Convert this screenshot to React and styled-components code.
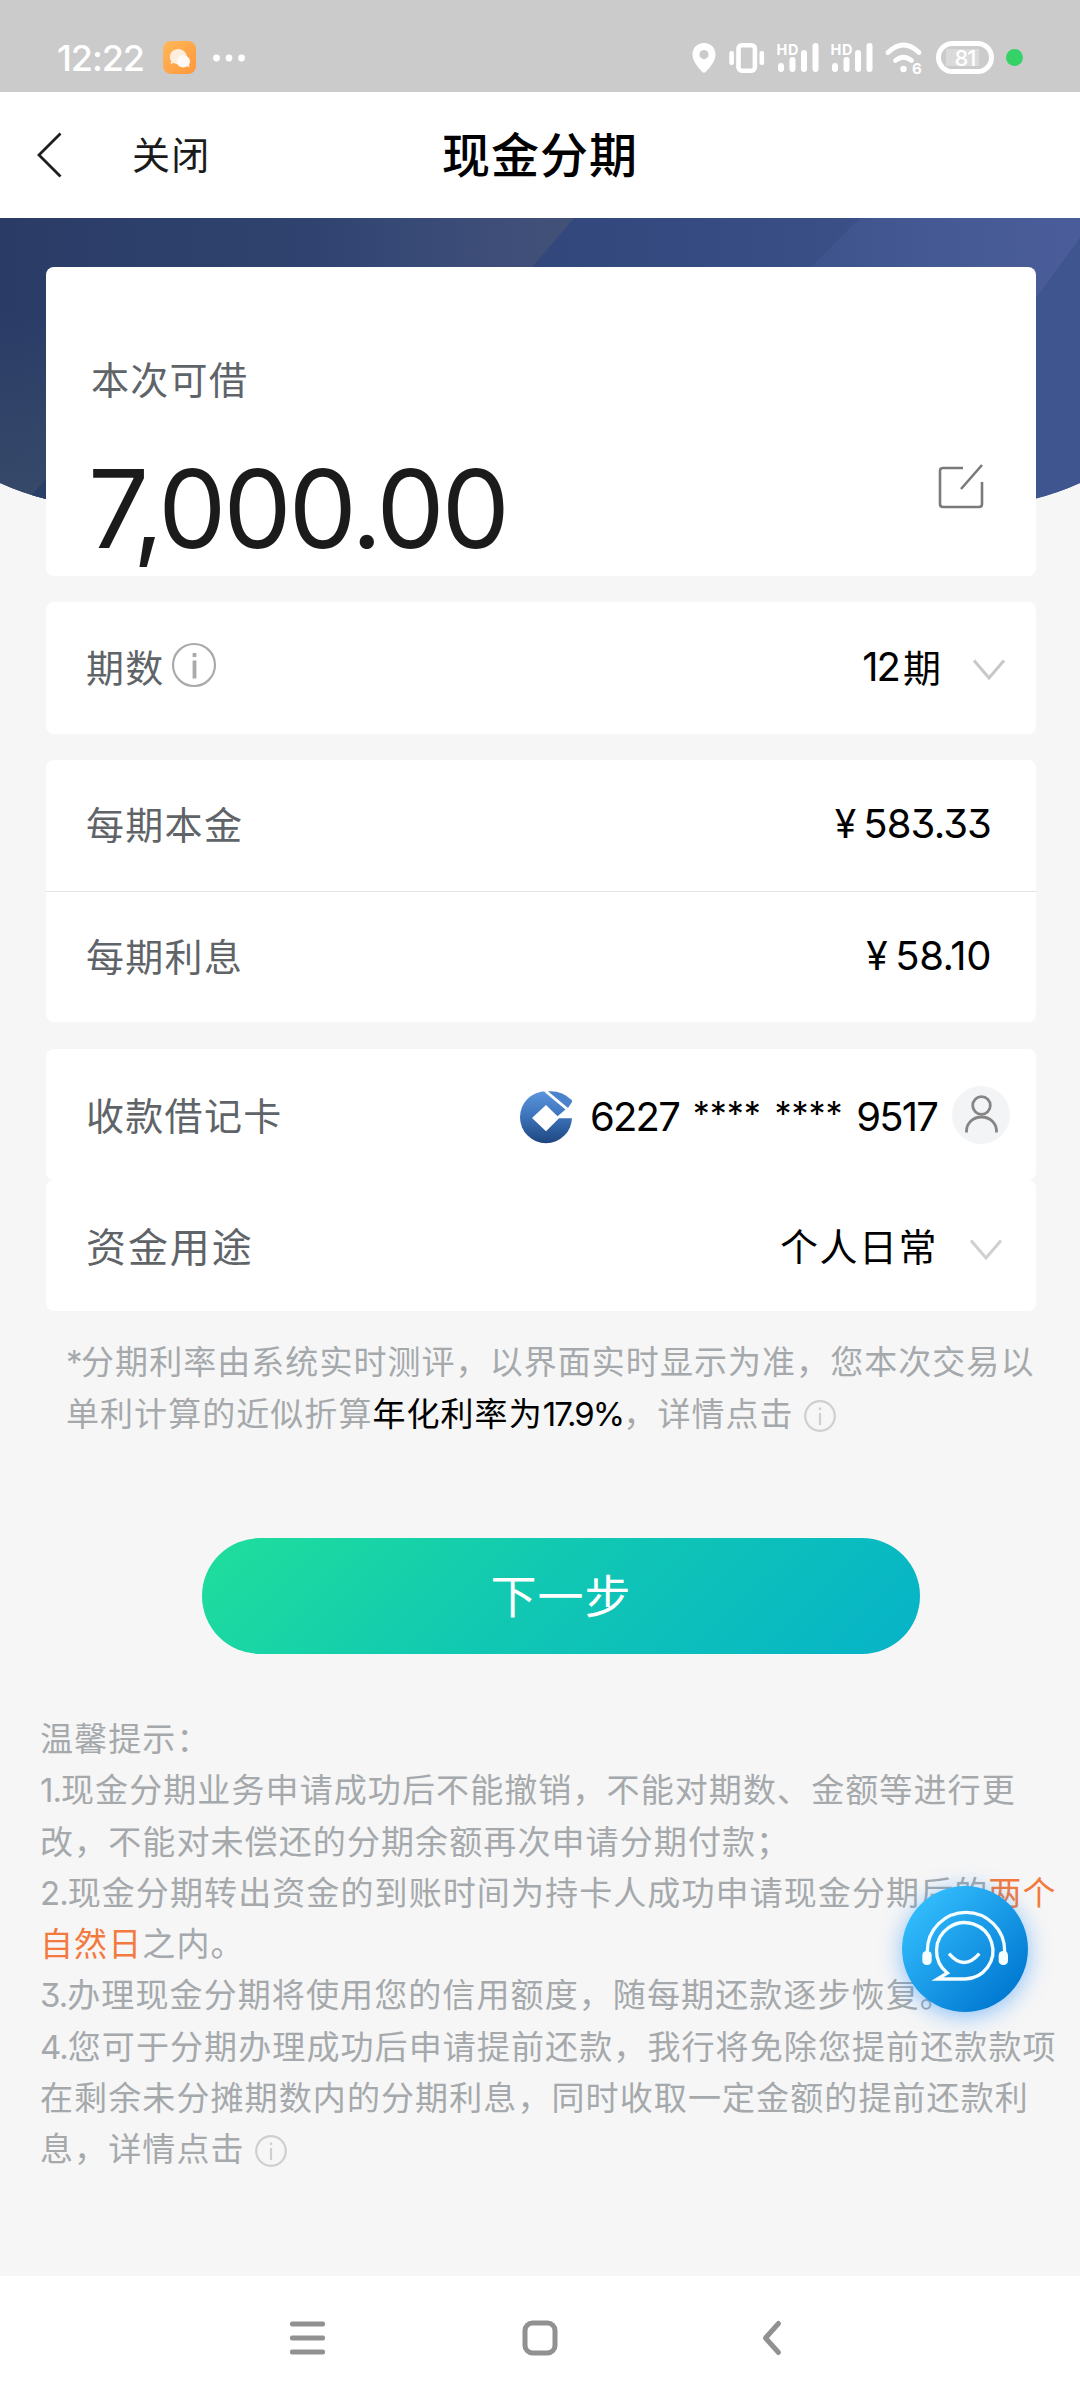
import React from 'react';
import styled, { createGlobalStyle } from 'styled-components';

const GlobalStyle = createGlobalStyle`
  * {
    box-sizing: border-box;
  }

  body {
    margin: 0;
    background-color: #f6f6f6;
    font-family: 'Inter', 'Noto Sans CJK SC', sans-serif;
    font-feature-settings: 'cv09';
  }

  svg {
    display: block;
    flex-shrink: 0;
    overflow: visible;
  }
`;

const Page = styled.div`
  display: flex;
  flex-direction: column;
  width: 1080px;
  height: 2400px;
  overflow: hidden;
`;

// status bar
const StatusBar = styled.div`
  display: flex;
  align-items: center;
  height: 92px;
  padding: 23px 57px 0;
  background-color: #cbcbcb;
  color: #fff;
`;

const Clock = styled.span`
  width: 106px;
  font-size: 36px;
  font-weight: 500;
  letter-spacing: -1.1px;
  white-space: nowrap;
`;

const StatusIcons = styled.div`
  display: flex;
  align-items: center;
  margin-left: auto;
`;

const Battery = styled.div`
  display: flex;
  align-items: center;
  justify-content: center;
  width: 58px;
  height: 33px;
  margin: 0 12px 0 13px;
  border: 5px solid #fff;
  border-radius: 17px;
  background: linear-gradient(#dadada, #dadada) 5px 3px / 33px 17px no-repeat;
  font-size: 22px;
  font-weight: 500;
  letter-spacing: -1px;
`;

const GreenDot = styled.i`
  width: 17px;
  height: 17px;
  border-radius: 50%;
  background-color: #36d167;
`;

// header
const Header = styled.header`
  display: grid;
  grid-template-columns: 132px 1fr auto 1fr 132px;
  align-items: center;
  height: 126px;
  background-color: #fff;
`;

const BackButton = styled.button`
  padding: 0 0 0 35px;
  border: none;
  background-color: transparent;
`;

const CloseText = styled.span`
  padding-bottom: 5px;
  color: #1a1a1a;
  font-size: 38px;
  letter-spacing: 1.3px;
`;

const Title = styled.h1`
  margin: 0;
  padding-bottom: 6px;
  color: #000;
  font-size: 48px;
  font-weight: 500;
  letter-spacing: 1px;
`;

// body
const Banner = styled.div`
  height: 310px;
  margin-bottom: -261px;
`;

const Content = styled.main`
  position: relative;
  flex: 1;
`;

const CardList = styled.div`
  display: flex;
  flex-direction: column;
  gap: 26px;
  padding: 0 44px 0 46px;
`;

const Card = styled.section`
  border-radius: 8px;
  background-color: #fff;
`;

const AmountCard = styled(Card)`
  height: 309px;
  padding: 85px 52px 0 45px;
`;

const AmountLabel = styled.div`
  color: #5f6468;
  font-size: 38px;
  line-height: 56px;
  letter-spacing: 1.3px;
`;

const AmountLine = styled.div`
  display: flex;
  align-items: flex-start;
  justify-content: space-between;
  margin-top: 33px;
`;

const Amount = styled.strong`
  padding-top: 3px;
  color: #1b1b1b;
  font-size: 108px;
  font-weight: 400;
  line-height: 130px;
  letter-spacing: -2.9px;
  margin-left: -3px;
`;

const EditIcon = styled.svg`
  width: 46px;
  height: 46px;
  margin-top: 22px;
`;

const Row = styled.div`
  display: flex;
  align-items: center;
  height: ${(props) => props.$height || 131}px;
  padding: 0 ${(props) => props.$right || 45}px 4px 40px;
  border-bottom: ${(props) => (props.$line ? '1px solid #e4e4e4' : 'none')};
`;

const BankCards = styled.div`
  margin-top: 1px;
`;

const RoundRow = styled(Row)`
  padding-bottom: 0;
  border-radius: 8px;
  background-color: #fff;
`;

const Label = styled.span`
  margin-right: auto;
  display: flex;
  align-items: center;
  padding-bottom: 2px;
  color: #5f6468;
  font-size: ${(props) => (props.$large ? 40 : 38)}px;
  letter-spacing: ${(props) => (props.$large ? 1.9 : 1.3)}px;
`;

const Value = styled.span`
  color: #000;
  font-size: ${(props) => props.$size || 38}px;
  letter-spacing: ${(props) => props.$spacing || 0}px;
  white-space: nowrap;
`;

const Yen = styled.span`
  margin-right: 8px;
  font-size: 39px;
`;

const CardNumber = styled.div`
  display: flex;
  justify-content: space-between;
  width: 347px;
  margin: 3px 15px 0 17px;
  color: #000;
  font-size: 40px;
  letter-spacing: -1.8px;
`;

const Stars = styled.span`
  font-size: 34px;
  line-height: 43px;
  letter-spacing: 0;
`;

const Avatar = styled.div`
  display: flex;
  align-items: center;
  justify-content: center;
  width: 58px;
  height: 58px;
  border-radius: 50%;
  background-color: #f3f4f6;
`;

const Chevron = styled.svg`
  width: 34px;
  height: 22px;
  margin: 8px 0 0 ${(props) => props.$left}px;
`;

const RateNote = styled.p`
  margin: 26px 0 0;
  padding-left: 66px;
  color: #a5a9ac;
  font-size: 33px;
  line-height: 51.5px;
  letter-spacing: 1.05px;
  white-space: nowrap;

  b {
    color: #000;
    font-weight: 400;
  }
`;

const Asterisk = styled.span`
  letter-spacing: -1.5px;
`;

const Rate = styled.span`
  letter-spacing: -1.9px;
`;

const InlineInfo = styled.svg`
  display: inline-block;
  width: 34px;
  height: 34px;
  margin-left: 9px;
  vertical-align: -7px;
`;

const NextButton = styled.button`
  display: block;
  width: 718px;
  height: 116px;
  margin: 98px 0 0 202px;
  padding: 0 0 7px;
  border: none;
  border-radius: 58px;
  background: linear-gradient(135deg, #1fdd9c 2%, #11c8b2 45%, #06b3c8 100%);
  color: #fff;
  font-family: inherit;
  font-size: 46px;
  letter-spacing: 1px;
`;

const Tips = styled.div`
  margin-top: 60px;
  padding-left: 40px;
  color: #a5a9ac;
  font-size: 33px;
  line-height: 51.3px;
  letter-spacing: 1.1px;
  white-space: nowrap;
`;

const Orange = styled.span`
  color: #f37a3e;
`;

const Num = styled.span`
  letter-spacing: -1px;
`;

const ServiceButton = styled.div`
  position: absolute;
  right: 52px;
  top: 1668px;
  width: 126px;
  height: 126px;
  border-radius: 50%;
  background: linear-gradient(135deg, #35c1ff 8%, #0077d1 88%);
  box-shadow: 0 4px 22px rgba(30, 140, 255, 0.5);
`;

const NavBar = styled.nav`
  display: flex;
  align-items: center;
  justify-content: space-between;
  height: 124px;
  padding: 0 298px 0 289px;
  background-color: #fff;
`;

const Signal = ({ left }) => (
  <svg width="42" height="32" viewBox="0 0 42 32" fill="#fff" style={{ marginLeft: left }}>
    <text x="-0.5" y="13" fontSize="14.5" fontWeight="700" textLength="22">
      HD
    </text>
    <rect x="1" y="21" width="6" height="9" rx="3" />
    <rect x="12.5" y="15" width="6" height="15" rx="3" />
    <rect x="24" y="8" width="6" height="22" rx="3" />
    <rect x="35.5" y="1" width="6" height="29" rx="3" />
  </svg>
);

const ChevronDown = ({ left, color = '#c8c8c8' }) => (
  <Chevron $left={left} viewBox="0 0 34 22" fill="none" stroke={color} strokeWidth="3">
    <path d="M2 1.5 L17 19 L32 1.5" />
  </Chevron>
);

const SmallInfo = () => (
  <InlineInfo viewBox="0 0 34 34" fill="none" stroke="#cdcfd0" strokeWidth="2.2">
    <circle cx="17" cy="17" r="14.8" />
    <path d="M17 14 V26 M17 8.5 V11" />
  </InlineInfo>
);

const BankLogo = () => (
  <svg width="53" height="53" viewBox="0 0 53 53" style={{ marginTop: 6 }}>
    <defs>
      <linearGradient id="bank" x1="0" y1="0" x2="0" y2="1">
        <stop offset="0" stopColor="#5a95dd" />
        <stop offset="0.45" stopColor="#3f76bd" />
        <stop offset="1" stopColor="#1e4680" />
      </linearGradient>
    </defs>
    <circle cx="26" cy="26.2" r="26" fill="url(#bank)" />
    <path d="M23 -1 H53 V27.3 H39 L26 40.2 L12 27 L26 14 L37.5 25.3 L45.5 18.5 L26.5 2.8 Z" fill="#fff" />
    <path d="M28 0.3 Q42 -0.6 52 9.3 V11 L48 17 Z" fill="#4a83cb" />
  </svg>
);

function App() {
  return (
    <Page>
      <GlobalStyle />
      <StatusBar>
        <Clock>12:22</Clock>
        <svg width="33" height="33" viewBox="0 0 33 33">
          <defs>
            <linearGradient id="chat" x1="0" y1="0" x2="1" y2="1">
              <stop offset="0" stopColor="#ffb95a" />
              <stop offset="1" stopColor="#ff963a" />
            </linearGradient>
          </defs>
          <rect width="33" height="33" rx="8" fill="url(#chat)" />
          <path d="M15 8 A9 7.8 0 0 1 23 19 A9 7.8 0 0 1 10.5 22 L7.5 23 L8.2 20 A9 7.8 0 0 1 15 8 Z" fill="#ffeede" />
          <path d="M21 14.5 A6.4 5.9 0 0 1 26 23.6 L26.6 26 L24 25.2 A6.5 6 0 1 1 21 14.5 Z" fill="#fffaf5" />
        </svg>
        <svg width="34" height="8" viewBox="0 0 34 8" fill="#fff" style={{ marginLeft: 16 }}>
          <circle cx="4.5" cy="4" r="3.4" />
          <circle cx="17" cy="4" r="3.4" />
          <circle cx="29.5" cy="4" r="3.4" />
        </svg>
        <StatusIcons>
          <svg width="24" height="30" viewBox="0 0 24 30">
            <path
              fill="#fff"
              fillRule="evenodd"
              d="M12 0 C5 0 0.5 5 0.5 11.5 C0.5 19 7 25 10.3 29 Q12 30.6 13.7 29 C17 25 23.5 19 23.5 11.5 C23.5 5 19 0 12 0 Z M12 7 A4.6 4.6 0 1 1 12 16.2 A4.6 4.6 0 1 1 12 7 Z"
            />
          </svg>
          <svg width="36" height="32" viewBox="0 0 36 32" style={{ marginLeft: 13 }}>
            <rect x="9.5" y="3.2" width="16.4" height="25.5" rx="3.5" fill="none" stroke="#fff" strokeWidth="4.6" />
            <rect x="0.3" y="9" width="4.6" height="14" rx="2" fill="#fff" />
            <rect x="30.5" y="9" width="4.6" height="14" rx="2" fill="#fff" />
          </svg>
          <Signal left={12} />
          <Signal left={12} />
          <svg width="38" height="32" viewBox="0 0 38 32" fill="none" stroke="#fff" strokeWidth="4.8" strokeLinecap="round" style={{ marginLeft: 12 }}>
            <path d="M3 10.5 Q18.5 -4.5 34 10.5" />
            <path d="M10.5 18.5 Q18.5 12 26.5 18.5" />
            <circle cx="18.5" cy="27" r="3.2" fill="#fff" stroke="none" />
            <text x="27" y="31.5" fontSize="15" fontWeight="700" fill="#fff" stroke="none">
              6
            </text>
          </svg>
          <Battery>81</Battery>
          <GreenDot />
        </StatusIcons>
      </StatusBar>

      <Header>
        <BackButton>
          <svg width="28" height="48" viewBox="0 0 28 48" fill="none" stroke="#1e1e1e" strokeWidth="2.8">
            <path d="M25.5 2.5 L4 24 L25.5 45.5" />
          </svg>
        </BackButton>
        <CloseText>关闭</CloseText>
        <Title>现金分期</Title>
      </Header>

      <Content>
        <Banner>
          <svg width="1080" height="310" viewBox="0 0 1080 310">
            <defs>
              <linearGradient id="banner" x1="0" y1="0" x2="1" y2="0">
                <stop offset="0" stopColor="#2a3c66" />
                <stop offset="0.25" stopColor="#2f426e" />
                <stop offset="0.55" stopColor="#33487d" />
                <stop offset="1" stopColor="#40568f" />
              </linearGradient>
              <linearGradient id="leftFade" x1="0" y1="0" x2="0" y2="1">
                <stop offset="0.3" stopColor="#374969" stopOpacity="0" />
                <stop offset="0.9" stopColor="#374969" />
              </linearGradient>
              <linearGradient id="shade" x1="0" y1="0" x2="1" y2="0">
                <stop offset="0.3" stopColor="#435178" stopOpacity="0" />
                <stop offset="1" stopColor="#435178" />
              </linearGradient>
              <linearGradient id="shine" x1="0" y1="0" x2="1" y2="0">
                <stop offset="0" stopColor="#4a5d9a" stopOpacity="0.1" />
                <stop offset="1" stopColor="#4a5d9a" />
              </linearGradient>
              <clipPath id="curve">
                <path d="M0 0 H1080 V265 Q1058 275 1034 281 Q540 420 46 281 Q22 275 0 265 Z" />
              </clipPath>
            </defs>
            <g clipPath="url(#curve)">
              <rect width="1080" height="310" fill="url(#banner)" />
              <path d="M200 0 H574 L480 110 H200 Z" fill="url(#shade)" />
              <path d="M860 0 H1080 V20 L1010 120 H740 Z" fill="url(#shine)" />
              <path d="M1080 20 V310 H1030 V88 Z" fill="#3f5590" />
              <path d="M0 0 H50 V310 H0 Z" fill="url(#leftFade)" />
              <path d="M50 256 V310 H20 L32 277 Z" fill="#293f68" />
            </g>
          </svg>
        </Banner>

        <CardList>
          <AmountCard>
            <AmountLabel>本次可借</AmountLabel>
            <AmountLine>
              <Amount>7,000.00</Amount>
              <EditIcon viewBox="0 0 46 46" fill="none" stroke="#7a7a7a" strokeWidth="2.6">
                <path d="M25 5 H5 Q2 5 2 8 V41 Q2 44 5 44 H41 Q44 44 44 41 V19" />
                <path d="M44 2 L23 26" />
              </EditIcon>
            </AmountLine>
          </AmountCard>

          <Card>
            <Row $height={132} $right={30}>
              <Label>
                期数
                <svg width="46" height="46" viewBox="0 0 46 46" fill="none" stroke="#aaa" style={{ marginLeft: 6 }}>
                  <circle cx="23" cy="23" r="21" strokeWidth="2.2" />
                  <path d="M23.5 18.5 V36.5 M23.5 11 V15" strokeWidth="3.8" />
                </svg>
              </Label>
              <Value $size={40} $spacing={-2}>
                12
              </Value>
              <Value style={{ marginLeft: 4, paddingBottom: 2 }}>期</Value>
              <ChevronDown left={31} />
            </Row>
          </Card>

          <Card>
            <Row $line $height={132}>
              <Label>每期本金</Label>
              <Value $size={40} $spacing={-0.9}>
                <Yen>¥</Yen>583.33
              </Value>
            </Row>
            <Row $height={130}>
              <Label>每期利息</Label>
              <Value $size={40} $spacing={-0.4}>
                <Yen>¥</Yen>58.10
              </Value>
            </Row>
          </Card>

          <BankCards>
            <RoundRow $right={26}>
              <Label>收款借记卡</Label>
              <BankLogo />
              <CardNumber>
                <span>6227</span>
                <Stars>****</Stars>
                <Stars>****</Stars>
                <span>9517</span>
              </CardNumber>
              <Avatar>
                <svg width="36" height="40" viewBox="0 0 36 40" fill="none" stroke="#858585" strokeWidth="2.8">
                  <circle cx="18.5" cy="10.5" r="8.8" />
                  <path d="M3.5 37.5 V36 A15 14 0 0 1 33.5 36 V37.5" />
                </svg>
              </Avatar>
            </RoundRow>
            <RoundRow $right={33}>
              <Label $large>资金用途</Label>
              <Value $spacing={1.5} style={{ paddingBottom: 3 }}>
                个人日常
              </Value>
              <ChevronDown left={31} color="#d0d0d0" />
            </RoundRow>
          </BankCards>
        </CardList>

        <RateNote>
          <Asterisk>*</Asterisk>分期利率由系统实时测评，以界面实时显示为准，您本次交易以
          <br />
          单利计算的近似折算
          <b>
            年化利率为<Rate>17.9%</Rate>
          </b>
          ，详情点击
          <SmallInfo />
        </RateNote>

        <NextButton>下一步</NextButton>

        <Tips>
          温馨提示：
          <br />
          <Num>1.</Num>现金分期业务申请成功后不能撤销，不能对期数、金额等进行更
          <br />
          改，不能对未偿还的分期余额再次申请分期付款；
          <br />
          <Num>2.</Num>现金分期转出资金的到账时间为持卡人成功申请现金分期后的<Orange>两个</Orange>
          <br />
          <Orange>自然日</Orange>之内。
          <br />
          <Num>3.</Num>办理现金分期将使用您的信用额度，随每期还款逐步恢复。
          <br />
          <Num>4.</Num>您可于分期办理成功后申请提前还款，我行将免除您提前还款款项
          <br />
          在剩余未分摊期数内的分期利息，同时收取一定金额的提前还款利
          <br />
          息，详情点击
          <SmallInfo />
        </Tips>

        <ServiceButton>
          <svg width="126" height="126" viewBox="126 139 378 378" fill="none" stroke="#f4fdff" strokeWidth="10">
            <path d="M202 340 V334 A116 116 0 0 1 434 334 V340" />
            <path d="M315 418 H232 L262 400 A84.5 84.5 0 1 1 315 418 Z" />
            <path d="M267 342 Q312 395 358 342" />
            <rect x="187" y="334" width="28" height="42" rx="13" fill="#f4fdff" stroke="none" />
            <rect x="416" y="334" width="28" height="42" rx="13" fill="#f4fdff" stroke="none" />
          </svg>
        </ServiceButton>
      </Content>

      <NavBar>
        <svg width="36" height="36" viewBox="0 0 36 36" fill="#919191">
          <rect x="1" y="1.5" width="35" height="5" rx="2" />
          <rect x="1" y="15.5" width="35" height="5" rx="2" />
          <rect x="1" y="29.5" width="35" height="5" rx="2" />
        </svg>
        <svg width="36" height="36" viewBox="0 0 36 36" fill="none" stroke="#919191" strokeWidth="5" style={{ marginRight: 7 }}>
          <rect x="3" y="3" width="30" height="30" rx="7.5" />
        </svg>
        <svg width="20" height="36" viewBox="0 0 20 36" fill="none" stroke="#919191" strokeWidth="5" strokeLinecap="round" strokeLinejoin="round">
          <path d="M16.5 3.5 L3.5 18 L16.5 32.5" />
        </svg>
      </NavBar>
    </Page>
  );
}

export default App;
